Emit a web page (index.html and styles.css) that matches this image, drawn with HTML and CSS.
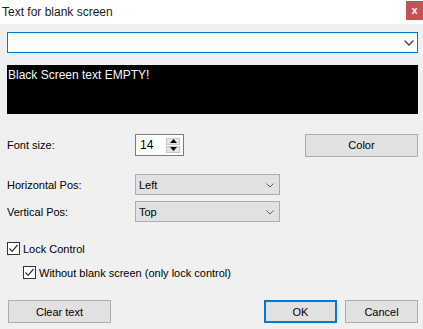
FILE: index.html
```html
<!DOCTYPE html>
<html>
<head>
<meta charset="utf-8">
<link rel="stylesheet" href="styles.css">
</head>
<body>
<div class="window">
  <div class="titlebar">
    <span class="title">Text for blank screen</span>
    <span class="close">x</span>
  </div>
  <div class="content">
    <div class="combo">
      <svg class="combo-arrow" width="10" height="6" viewBox="0 0 10 6"><path d="M0.5 0.5 L5 5 L9.5 0.5" fill="none" stroke="#404040" stroke-width="1.3"/></svg>
    </div>
    <div class="preview">Black Screen text EMPTY!</div>
    <div class="row row-font">
      <span class="label">Font size:</span>
      <div class="spin">
        <span class="spin-value">14</span>
        <div class="spin-btns">
          <div class="spin-btn"><svg width="7" height="4" viewBox="0 0 7 4"><path d="M3.5 0 L7 4 L0 4 Z" fill="#000"/></svg></div>
          <div class="spin-btn"><svg width="7" height="4" viewBox="0 0 7 4"><path d="M0 0 L7 0 L3.5 4 Z" fill="#000"/></svg></div>
        </div>
      </div>
      <div class="spacer"></div>
      <div class="button color-btn">Color</div>
    </div>
    <div class="row row-h">
      <span class="label">Horizontal Pos:</span>
      <div class="select"><span>Left</span><svg width="8" height="5" viewBox="0 0 8 5"><path d="M0.5 0.5 L4 4 L7.5 0.5" fill="none" stroke="#606060" stroke-width="1"/></svg></div>
    </div>
    <div class="row row-v">
      <span class="label">Vertical Pos:</span>
      <div class="select"><span>Top</span><svg width="8" height="5" viewBox="0 0 8 5"><path d="M0.5 0.5 L4 4 L7.5 0.5" fill="none" stroke="#606060" stroke-width="1"/></svg></div>
    </div>
    <label class="check check1"><span class="box"><svg width="11" height="11" viewBox="0 0 11 11"><path d="M1.5 5.5 L4.2 8.3 L9.5 2" fill="none" stroke="#333" stroke-width="1.2"/></svg></span>Lock Control</label>
    <label class="check check2"><span class="box"><svg width="11" height="11" viewBox="0 0 11 11"><path d="M1.5 5.5 L4.2 8.3 L9.5 2" fill="none" stroke="#333" stroke-width="1.2"/></svg></span>Without blank screen (only lock control)</label>
    <div class="buttons">
      <div class="button clear-btn">Clear text</div>
      <div class="spacer"></div>
      <div class="button ok-btn">OK</div>
      <div class="button cancel-btn">Cancel</div>
    </div>
  </div>
</div>
</body>
</html>
```
FILE: styles.css
```css
html, body {
  margin: 0;
  padding: 0;
}
body {
  width: 423px;
  height: 329px;
  overflow: hidden;
  font-family: "Liberation Sans", Arial, sans-serif;
  font-size: 11px;
  color: #000;
}
.window {
  width: 423px;
  height: 329px;
  background: #f0f0f0;
  display: flex;
  flex-direction: column;
}
.titlebar {
  height: 24px;
  background: #fff;
  display: flex;
  align-items: flex-start;
  justify-content: space-between;
}
.title {
  font-size: 12px;
  color: #1a1a1a;
  margin: 5px 0 0 2px;
}
.close {
  width: 17px;
  height: 19px;
  margin-top: 1px;
  background: #c75050;
  color: #fff;
  font-weight: bold;
  font-size: 11px;
  display: flex;
  align-items: center;
  justify-content: center;
  line-height: 1;
}
.content {
  flex: 1;
  display: flex;
  flex-direction: column;
  padding: 8px 5px 0 7px;
}
.combo {
  height: 19px;
  border: 1px solid #0078d7;
  background: #fff;
  display: flex;
  align-items: center;
  justify-content: flex-end;
  padding-right: 3px;
}
.combo-arrow {
  margin-top: 1px;
}
.preview {
  margin-top: 12px;
  height: 49px;
  background: #000;
  color: #f4f8ff;
  font-size: 12px;
  padding: 3px 0 0 1px;
  box-sizing: border-box;
  line-height: 14px;
}
.row {
  display: flex;
  align-items: center;
}
.label {
  width: 128px;
}
.row-font {
  margin-top: 20px;
  height: 22px;
}
.spin {
  height: 20px;
  border: 1px solid #7a7a7a;
  background: #fff;
  display: flex;
  align-items: center;
  justify-content: space-between;
  padding: 0 3px 0 4px;
  box-sizing: content-box;
  width: 40px;
}
.spin-value {
  font-size: 12px;
  color: #000;
}
.spin-btns {
  display: flex;
  flex-direction: column;
  gap: 1px;
}
.spin-btn {
  width: 12px;
  background: #e5e5e5;
  border: 1px solid #c8c8c8;
  display: flex;
  align-items: center;
  justify-content: center;
  box-sizing: content-box;
  height: 5px;
}
.spacer {
  flex: 1;
}
.button {
  height: 21px;
  background: #e1e1e1;
  border: 1px solid #adadad;
  display: flex;
  align-items: center;
  justify-content: center;
  font-size: 11px;
  box-sizing: content-box;
}
.color-btn {
  width: 111px;
}
.row-h {
  margin-top: 18px;
  height: 21px;
}
.row-v {
  margin-top: 6px;
  height: 21px;
}
.select {
  background: #e1e1e1;
  border: 1px solid #adadad;
  display: flex;
  align-items: center;
  justify-content: space-between;
  padding: 0 5px 0 3px;
  box-sizing: border-box;
  width: 145px;
  height: 21px;
  font-size: 11px;
}
.select svg {
  margin-top: 1px;
}
.check {
  display: flex;
  align-items: center;
  font-size: 11px;
  height: 13px;
}
.check1 {
  margin-top: 20px;
}
.check2 {
  margin-top: 11px;
  margin-left: 16px;
}
.box {
  width: 11px;
  height: 11px;
  border: 1px solid #333;
  background: #fff;
  margin-right: 3px;
  display: flex;
}
.buttons {
  margin-top: 21px;
  display: flex;
  padding-left: 1px;
}
.clear-btn {
  width: 101px;
}
.ok-btn {
  width: 71px;
  border: 1px solid #0078d7;
  box-shadow: inset 0 0 0 1px #0078d7;
}
.cancel-btn {
  width: 71px;
  margin-left: 8px;
}
```
